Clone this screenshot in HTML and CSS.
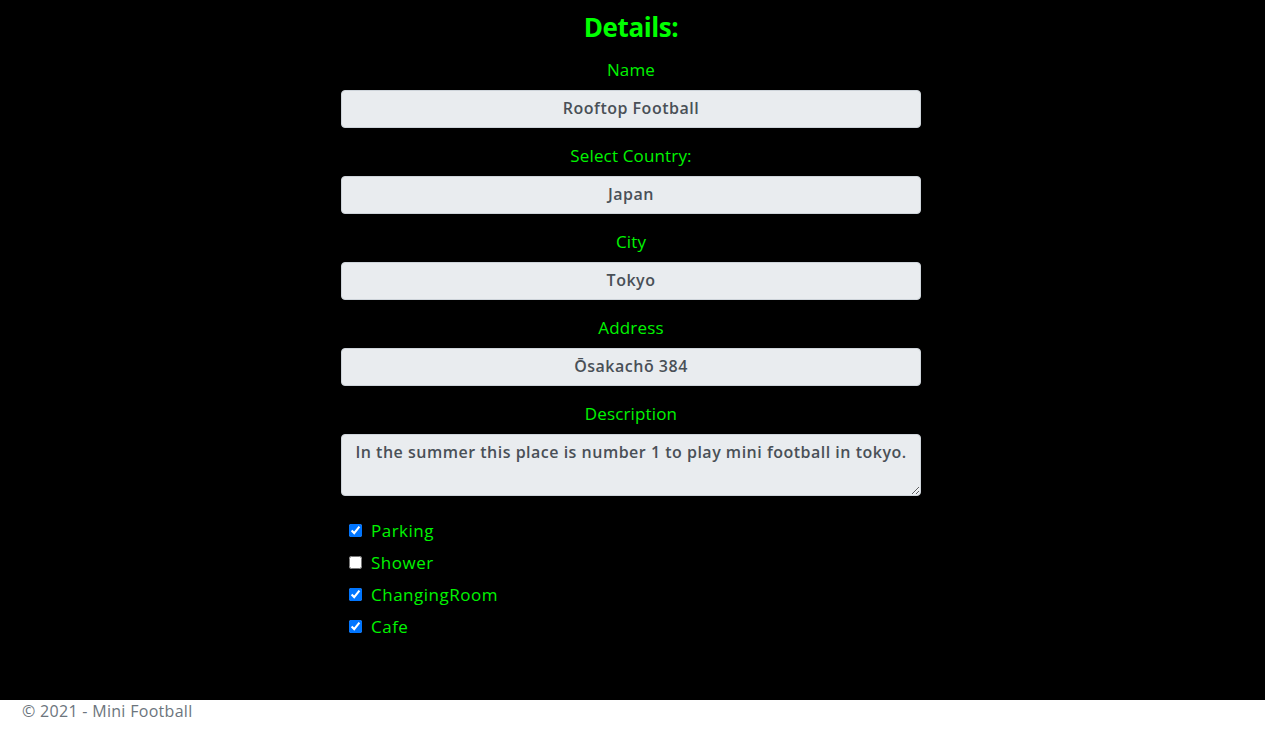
FILE: index.html
```html
<!DOCTYPE html>
<html lang="en">
<head>
<meta charset="utf-8">
<title>Details - Mini Football</title>
<link rel="stylesheet" href="styles.css">
</head>
<body>
<div class="page">
  <main class="main">
    <div class="details">
      <h3 class="title">Details:</h3>
      <div class="group">
        <label class="label" for="name">Name</label>
        <input class="field" id="name" type="text" value="Rooftop Football" readonly>
      </div>
      <div class="group">
        <label class="label" for="country">Select Country:</label>
        <input class="field" id="country" type="text" value="Japan" readonly>
      </div>
      <div class="group">
        <label class="label" for="city">City</label>
        <input class="field" id="city" type="text" value="Tokyo" readonly>
      </div>
      <div class="group">
        <label class="label" for="address">Address</label>
        <input class="field" id="address" type="text" value="Ōsakachō 384" readonly>
      </div>
      <div class="group">
        <label class="label" for="desc">Description</label>
        <textarea class="field area" id="desc" rows="2" readonly>In the summer this place is number 1 to play mini football in tokyo.</textarea>
      </div>
      <div class="checks">
        <label class="check"><input type="checkbox" checked><span>Parking</span></label>
        <label class="check"><input type="checkbox"><span>Shower</span></label>
        <label class="check"><input type="checkbox" checked><span>ChangingRoom</span></label>
        <label class="check"><input type="checkbox" checked><span>Cafe</span></label>
      </div>
    </div>
  </main>
  <footer class="footer">
    <div class="footer-text">© 2021 - Mini Football</div>
  </footer>
</div>
</body>
</html>
```

FILE: styles.css
```css
* { box-sizing: border-box; }

html, body {
  margin: 0;
  padding: 0;
  height: 100%;
}

body {
  font-family: "Open Sans", "DejaVu Sans", sans-serif;
  background: #fff;
}

.page {
  display: flex;
  flex-direction: column;
  min-height: 100vh;
}

.main {
  flex: 1;
  background: #000;
  display: flex;
  justify-content: center;
  padding-top: 10px;
}

.details {
  width: 580px;
  margin-left: -3px;
  display: flex;
  flex-direction: column;
}

.title {
  margin: 0 0 14px;
  color: #00ff00;
  font-size: 26px;
  font-weight: 700;
  line-height: 34px;
  letter-spacing: -0.4px;
  text-align: center;
}

.group {
  display: flex;
  flex-direction: column;
  margin-bottom: 16px;
}

.label {
  color: #00f400;
  font-size: 17px;
  line-height: 24px;
  letter-spacing: 0.15px;
  text-align: center;
  margin-bottom: 8px;
}

.field {
  display: block;
  width: 100%;
  height: 38px;
  padding: 5px 12px 7px;
  font-family: inherit;
  font-size: 16px;
  font-weight: 600;
  line-height: 24px;
  letter-spacing: 0.5px;
  color: #495057;
  background: #e9ecef;
  border: 1px solid #ced4da;
  border-radius: 4px;
  text-align: center;
  outline: none;
}

.area {
  height: 62px;
  resize: vertical;
}

.checks {
  display: flex;
  flex-direction: column;
  padding-left: 8px;
  padding-top: 2px;
}

.check {
  display: flex;
  align-items: center;
  height: 32px;
  color: #00f400;
  font-size: 17px;
  letter-spacing: 0.5px;
}

.check input {
  margin: 0 9px 0 0;
  width: 13px;
  height: 13px;
}

.footer {
  height: 30px;
  background: #fff;
}

.footer-text {
  padding-left: 22px;
  color: #6c757d;
  font-size: 16px;
  line-height: 22px;
  letter-spacing: 0.3px;
}
```
